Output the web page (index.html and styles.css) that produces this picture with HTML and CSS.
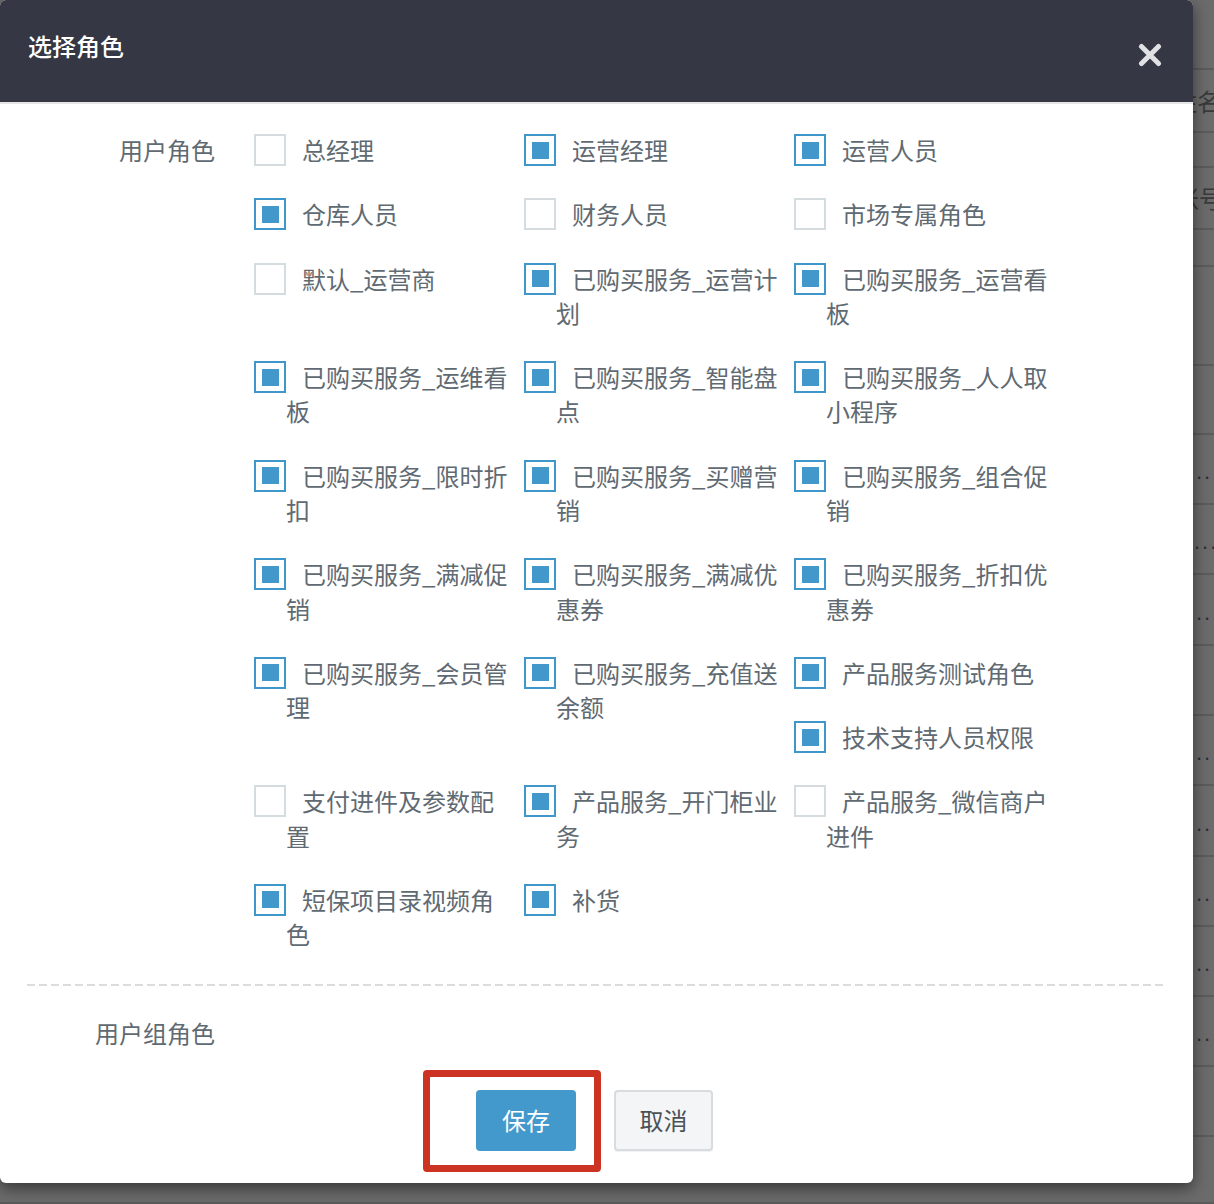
FILE: index.html
```html
<!DOCTYPE html>
<html lang="zh-CN">
<head>
<meta charset="utf-8">
<title>选择角色</title>
<link rel="stylesheet" href="styles.css">
</head>
<body>
<div class="bg">
  <div class="bg-row"></div>
  <div class="bg-row h63"><span class="cell c-name">姓名</span></div>
  <div class="bg-row h35"></div>
  <div class="bg-row h62"><span class="cell c-acc">账号</span></div>
  <div class="bg-row h37"></div>
  <div class="bg-row h99"></div>
  <div class="bg-row h69"></div>
  <div class="bg-row"><span class="dots">...</span></div>
  <div class="bg-row"><span class="dots wide">...</span></div>
  <div class="bg-row h71"><span class="dots">...</span></div>
  <div class="bg-row"></div>
  <div class="bg-row"><span class="dots">...</span></div>
  <div class="bg-row h71"><span class="dots">...</span></div>
  <div class="bg-row"><span class="dots">...</span></div>
  <div class="bg-row"><span class="dots">...</span></div>
  <div class="bg-row"><span class="dots">...</span></div>
  <div class="bg-row"></div>
  <div class="bg-row h67"></div>
</div>

<div class="modal">
  <div class="modal-header">
    <h4 class="modal-title">选择角色</h4>
    <button class="close" type="button" aria-label="关闭">
      <svg viewBox="0 0 24 24" width="24" height="24"><path d="M3.5 3.5L20.5 20.5M20.5 3.5L3.5 20.5" stroke="#e1e1e3" stroke-width="5" stroke-linecap="round" fill="none"/></svg>
    </button>
  </div>
  <div class="modal-body">
    <div class="form-row">
      <label class="ctl-label">用户角色</label>
      <div class="checks">
        <div class="item"><span class="box"></span><span class="txt">总经理</span></div>
        <div class="item"><span class="box on"></span><span class="txt">运营经理</span></div>
        <div class="item"><span class="box on"></span><span class="txt">运营人员</span></div>
        <div class="item"><span class="box on"></span><span class="txt">仓库人员</span></div>
        <div class="item"><span class="box"></span><span class="txt">财务人员</span></div>
        <div class="item"><span class="box"></span><span class="txt">市场专属角色</span></div>
        <div class="item"><span class="box"></span><span class="txt">默认_运营商</span></div>
        <div class="item"><span class="box on"></span><span class="txt">已购买服务_运营计划</span></div>
        <div class="item"><span class="box on"></span><span class="txt">已购买服务_运营看板</span></div>
        <div class="item"><span class="box on"></span><span class="txt">已购买服务_运维看板</span></div>
        <div class="item"><span class="box on"></span><span class="txt">已购买服务_智能盘点</span></div>
        <div class="item"><span class="box on"></span><span class="txt">已购买服务_人人取小程序</span></div>
        <div class="item"><span class="box on"></span><span class="txt">已购买服务_限时折扣</span></div>
        <div class="item"><span class="box on"></span><span class="txt">已购买服务_买赠营销</span></div>
        <div class="item"><span class="box on"></span><span class="txt">已购买服务_组合促销</span></div>
        <div class="item"><span class="box on"></span><span class="txt">已购买服务_满减促销</span></div>
        <div class="item"><span class="box on"></span><span class="txt">已购买服务_满减优惠券</span></div>
        <div class="item"><span class="box on"></span><span class="txt">已购买服务_折扣优惠券</span></div>
        <div class="item"><span class="box on"></span><span class="txt">已购买服务_会员管理</span></div>
        <div class="item"><span class="box on"></span><span class="txt">已购买服务_充值送余额</span></div>
        <div class="item"><span class="box on"></span><span class="txt">产品服务测试角色</span></div>
        <div class="item"><span class="box on"></span><span class="txt">技术支持人员权限</span></div>
        <div class="item"><span class="box"></span><span class="txt">支付进件及参数配置</span></div>
        <div class="item"><span class="box on"></span><span class="txt">产品服务_开门柜业务</span></div>
        <div class="item"><span class="box"></span><span class="txt">产品服务_微信商户进件</span></div>
        <div class="item"><span class="box on"></span><span class="txt">短保项目录视频角色</span></div>
        <div class="item"><span class="box on"></span><span class="txt">补货</span></div>
      </div>
    </div>
    <div class="divider"></div>
    <div class="form-row group">
      <label class="ctl-label">用户组角色</label>
      <div class="checks empty"></div>
    </div>
    <div class="actions">
      <span class="mark"><button class="btn btn-primary" type="button">保存</button></span>
      <button class="btn btn-default" type="button">取消</button>
    </div>
  </div>
</div>
</body>
</html>
```

FILE: styles.css
```css
*, *::before, *::after { box-sizing: border-box; }

html, body {
  margin: 0;
  padding: 0;
}

body {
  width: 1214px;
  height: 1204px;
  overflow: hidden;
  position: relative;
  background: #6b6b6b;
  font-family: "Noto Sans CJK SC", "Noto Sans", sans-serif;
}

/* ---------- dimmed page behind the dialog ---------- */
.bg { width: 1214px; }

.bg-row {
  height: 70px;
  border-bottom: 2px solid #5b5b5b;
  display: flex;
  align-items: center;
  white-space: nowrap;
  overflow: hidden;
  font-size: 24px;
  color: #3a3a3a;
}
.h63 { height: 63px; }
.h35 { height: 35px; }
.h62 { height: 62px; }
.h37 { height: 37px; }
.h99 { height: 99px; }
.h69 { height: 69px; }
.h71 { height: 71px; }
.h67 { height: 67px; }

.cell { line-height: 1; }
.c-name { margin-left: 1173px; }
.c-acc { margin-left: 1175px; }

.dots {
  margin-left: 1196px;
  margin-top: 6px;
  font-family: "Liberation Sans", Arial, sans-serif;
  font-size: 22px;
  letter-spacing: 2px;
  color: #2e2e2e;
}
.dots.wide { margin-left: 1194px; }

/* ---------- dialog ---------- */
.modal {
  position: absolute;
  top: 0;
  left: 0;
  width: 1193px;
  background: #fff;
  border-radius: 6px;
  box-shadow: 0 5px 15px rgba(0, 0, 0, 0.5);
  overflow: hidden;
}

.modal-header {
  height: 104px;
  background: #353744;
  border-bottom: 2px solid #e5e5e5;
  display: flex;
  justify-content: space-between;
  align-items: flex-start;
  padding: 29px 31px 0 28px;
}

.modal-title {
  margin: 0;
  font-size: 24px;
  line-height: 34px;
  font-weight: 500;
  color: #fff;
}

.close {
  margin-top: 14px;
  width: 24px;
  height: 24px;
  padding: 0;
  border: 0;
  background: transparent;
  display: block;
}
.close svg { display: block; }

.modal-body {
  padding: 29px 0 32px 0;
}

.form-row {
  display: flex;
  align-items: flex-start;
}

.ctl-label {
  flex: none;
  width: 215px;
  margin-right: 39px;
  text-align: right;
  font-size: 24px;
  line-height: 34.2857px;
  color: #5f6a72;
}

.checks {
  width: 810px;
  display: flow-root;
}
.checks.empty { min-height: 34.2857px; }

.item {
  float: left;
  width: 270px;
  padding: 0 13px 0 32px;
  margin-bottom: 30px;
  font-size: 24px;
  line-height: 34.2857px;
  color: #5f6a72;
}

.box {
  display: inline-grid;
  place-items: center;
  width: 32px;
  height: 32px;
  margin: 1px 16px 0 -32px;
  vertical-align: top;
  border: 2px solid #d4dcdf;
  background: #fff;
}
.box.on { border-color: #3e96cb; }
.box.on::after {
  content: "";
  width: 17px;
  height: 17px;
  background: #4398cb;
}

.divider {
  height: 2px;
  margin: 2px 30px 0 27px;
  background-image: repeating-linear-gradient(to right, #dcdcdc 0 8px, transparent 8px 12px);
}

.group { padding-top: 30px; }

.actions {
  display: flex;
  align-items: flex-start;
  gap: 38px;
  margin-top: 40px;
  padding-left: 476px;
}

.mark {
  position: relative;
  display: block;
}
.mark::before {
  content: "";
  position: absolute;
  left: -53px;
  top: -20px;
  width: 178px;
  height: 102px;
  border: 7px solid #cc3323;
  border-radius: 4px;
}

.btn {
  display: block;
  height: 61px;
  padding: 0;
  font-family: inherit;
  font-size: 24px;
  line-height: 1;
  border-radius: 4px;
}

.btn-primary {
  position: relative;
  width: 100px;
  background: #4399cb;
  border: 0;
  color: #fff;
}

.btn-default {
  width: 99px;
  background: #f4f5f6;
  border: 2px solid #d9dcdf;
  color: #4b5257;
  box-shadow: 0 1px 1px rgba(0, 0, 0, 0.06);
}
```
